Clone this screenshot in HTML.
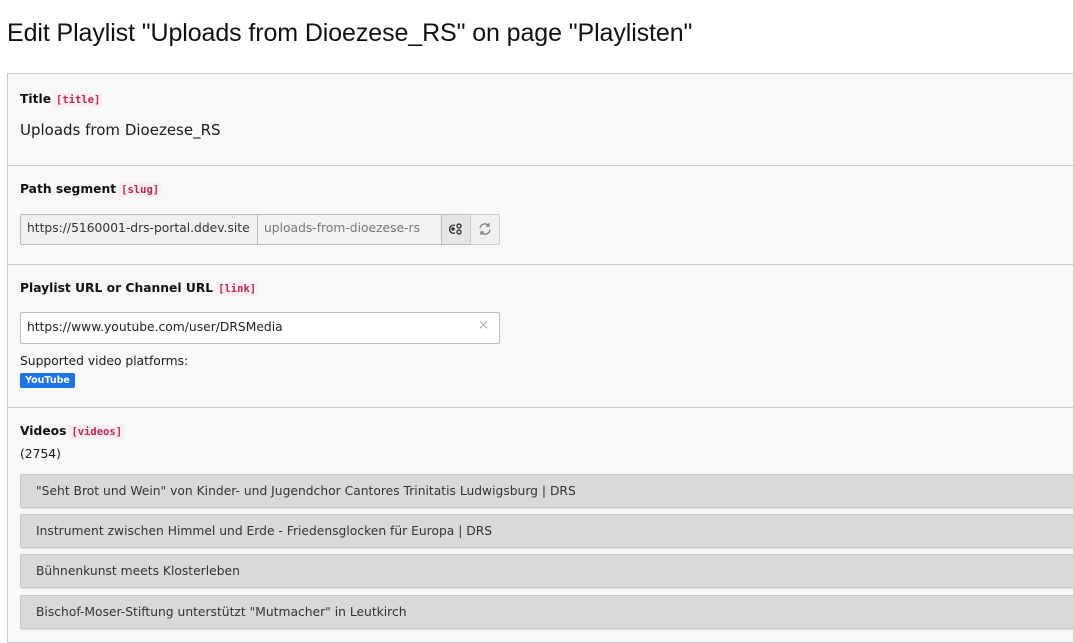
<!DOCTYPE html>
<html><head><meta charset="utf-8"><style>
*{margin:0;padding:0;box-sizing:border-box}
body{width:1073px;height:634px;overflow:hidden;background:#fff;font-family:"DejaVu Sans","Liberation Sans",sans-serif;color:#1a1a1a;position:relative}
.a{position:absolute}
h1{position:absolute;left:7px;top:19px;font:25px "Liberation Sans",sans-serif;letter-spacing:-0.1px;color:#111;white-space:nowrap}
.panel{position:absolute;left:7px;top:73px;width:1070px;height:570px;background:#f8f8f8;border:1px solid #c8c8c8}
.hr{position:absolute;left:8px;width:1065px;height:1px;background:#c8c8c8}
.lbl{position:absolute;left:20px;font-weight:bold;font-size:12.3px;white-space:nowrap;color:#111}
.lbl code{font:bold 10.5px "DejaVu Sans Mono",monospace;color:#c7254e;background:#f7eef1;padding:1px 2px;margin-left:3px}
.t12{font-size:12.3px;white-space:nowrap}
.row{position:absolute;left:20px;width:1060px;height:34px;background:#d9d9d9;border:1px solid #c8c8c8;border-radius:2px;font-size:12.3px;padding-left:15px;line-height:32px;color:#333;white-space:nowrap;box-shadow:0 1px 1px rgba(0,0,0,.1)}
</style></head><body>
<h1>Edit Playlist "Uploads from Dioezese_RS" on page "Playlisten"</h1>
<div class="panel"></div>
<div class="lbl" style="top:92px">Title<code>[title]</code></div>
<div class="a" style="left:20px;top:121px;font-size:15px;white-space:nowrap">Uploads from Dioezese_RS</div>
<div class="hr" style="top:165px"></div>
<div class="lbl" style="top:182px">Path segment<code>[slug]</code></div>
<div class="a" style="left:20px;top:214px;width:238px;height:31px;background:#f0f0f0;border:1px solid #bbb;border-radius:2px 0 0 2px"></div>
<div class="a t12" style="left:27px;top:221px;color:#333">https://5160001-drs-portal.ddev.site</div>
<div class="a" style="left:257px;top:214px;width:185px;height:31px;background:#f2f2f2;border:1px solid #bbb"></div>
<div class="a t12" style="left:264px;top:221px;color:#777">uploads-from-dioezese-rs</div>
<div class="a" style="left:441px;top:214px;width:30px;height:31px;background:#e6e6e6;border:1px solid #bbb"></div>
<svg class="a" style="left:448px;top:221px" width="16" height="16" viewBox="0 0 16 16" fill="none" stroke="#333" stroke-width="1.4"><path d="M7 4.5A4 4 0 1 0 7 12"/><circle cx="5" cy="8" r="1" fill="#333"/><circle cx="11" cy="5" r="2"/><circle cx="11" cy="11" r="2"/></svg>
<div class="a" style="left:470px;top:214px;width:30px;height:31px;background:#efefef;border:1px solid #ccc;border-radius:0 2px 2px 0"></div>
<svg class="a" style="left:477px;top:221px" width="16" height="16" viewBox="0 0 16 16" fill="none" stroke="#777" stroke-width="1.2"><path d="M3 7a5 5 0 0 1 9-2M13 9a5 5 0 0 1-9 2"/><path d="M12 2v3H9M4 14v-3h3"/></svg>
<div class="hr" style="top:264px"></div>
<div class="lbl" style="top:281px">Playlist URL or Channel URL<code>[link]</code></div>
<div class="a" style="left:20px;top:312px;width:480px;height:32px;background:#fff;border:1px solid #bbb;border-radius:2px"></div>
<div class="a t12" style="left:27px;top:320px;color:#222">https://www.youtube.com/user/DRSMedia</div>
<div class="a" style="left:478px;top:318px;color:#aaa;font-size:13px">×</div>
<div class="a t12" style="left:20px;top:354px">Supported video platforms:</div>
<div class="a" style="left:20px;top:373px;width:55px;height:15px;background:#1a73e8;border-radius:2px;color:#fff;font-size:9.5px;font-weight:bold;text-align:center;line-height:15px">YouTube</div>
<div class="hr" style="top:407px"></div>
<div class="lbl" style="top:424px">Videos<code>[videos]</code></div>
<div class="a t12" style="left:20px;top:447px">(2754)</div>
<div class="row" style="top:474px">"Seht Brot und Wein" von Kinder- und Jugendchor Cantores Trinitatis Ludwigsburg | DRS</div>
<div class="row" style="top:514px">Instrument zwischen Himmel und Erde - Friedensglocken für Europa | DRS</div>
<div class="row" style="top:554px">Bühnenkunst meets Klosterleben</div>
<div class="row" style="top:595px">Bischof-Moser-Stiftung unterstützt "Mutmacher" in Leutkirch</div>
</body></html>
